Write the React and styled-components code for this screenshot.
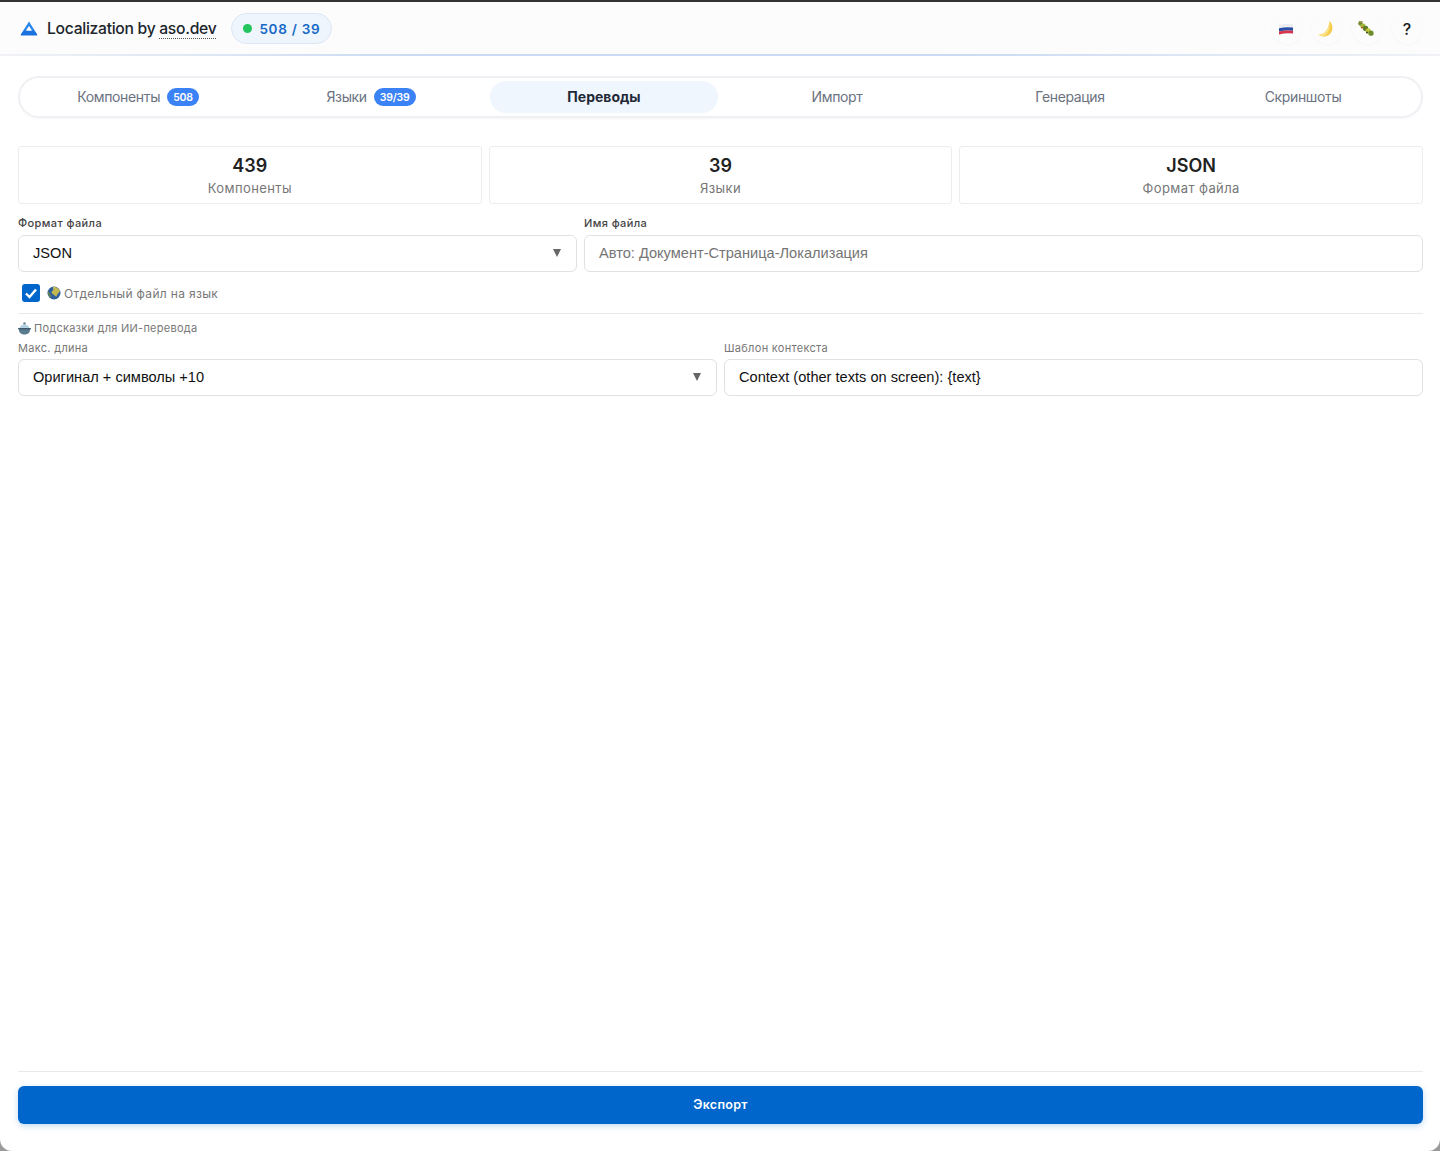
import styled, { createGlobalStyle } from 'styled-components';

const GlobalStyle = createGlobalStyle`
  html, body {
    margin: 0;
    padding: 0;
    height: 100%;
    background: #9a9a9a;
  }
  #root {
    height: 100%;
  }
  * {
    box-sizing: border-box;
  }
`;

const Page = styled.div`
  height: 1151px;
  display: flex;
  flex-direction: column;
  background: #fff;
  border-top: 2px solid #333;
  border-radius: 0 0 12px 12px;
  overflow: hidden;
  font-family: Inter, "Liberation Sans", sans-serif;
  color: #1f2937;
`;

const Header = styled.header`
  height: 54px;
  flex: none;
  display: flex;
  align-items: center;
  justify-content: space-between;
  padding: 1px 18px 0 20px;
  background: #fcfcfd;
  border-bottom: 2px solid;
  border-image: linear-gradient(90deg, #f0f2f5 0%, #c9daf2 30%, #c9daf2 65%, #f0f2f5 100%) 1;
`;

const Brand = styled.div`
  display: flex;
  align-items: center;
  gap: 9px;
  font-size: 15.7px;
  font-weight: 500;
  letter-spacing: -0.3px;
  color: #20252c;
`;

const BrandLink = styled.span`
  border-bottom: 1px dotted #555;
  line-height: 17px;
`;

const Counter = styled.div`
  display: flex;
  align-items: center;
  gap: 7px;
  height: 31px;
  margin-left: 6px;
  padding: 0 11px;
  background: #eff5fd;
  border: 1px solid #dbe6f6;
  border-radius: 16px;
  font-size: 13.5px;
  font-weight: 600;
  letter-spacing: 0.72px;
  color: #1668c7;
`;

const Dot = styled.span`
  width: 9px;
  height: 9px;
  border-radius: 50%;
  background: #22c55e;
`;

const HeaderActions = styled.div`
  display: flex;
  gap: 10px;
`;

const IconButton = styled.button`
  width: 30px;
  height: 30px;
  padding: 0;
  display: flex;
  align-items: center;
  justify-content: center;
  border: none;
  border-radius: 50%;
  background: #fcfcfd;
  box-shadow: 0 1px 3px rgba(20, 30, 50, 0.03);
  font: 500 16px Inter, sans-serif;
  color: #222;
`;

const Main = styled.main`
  flex: 1;
  display: flex;
  flex-direction: column;
  padding: 20px 17px 27px 18px;
`;

const Tabs = styled.nav`
  height: 42px;
  flex: none;
  display: grid;
  grid-template-columns: repeat(6, 1fr);
  column-gap: 5px;
  align-items: center;
  padding: 0 4px;
  border: 2px solid #eef0f3;
  border-radius: 21px;
  box-shadow: 0 1px 2px rgba(20, 30, 50, 0.04);
`;

const Tab = styled.div`
  height: 32px;
  padding-bottom: 2px;
  display: flex;
  align-items: center;
  justify-content: center;
  gap: 7px;
  border-radius: 16px;
  background: ${(props) => (props.$active ? '#eff6fe' : 'transparent')};
  font-size: 14px;
  font-weight: ${(props) => (props.$active ? 700 : 400)};
  letter-spacing: ${(props) => (props.$active ? '0' : '-0.35px')};
  color: ${(props) => (props.$active ? '#1f2937' : '#6b7280')};
`;

const Badge = styled.span`
  height: 18px;
  margin-top: 2px;
  padding: 0 6px;
  display: flex;
  align-items: center;
  border-radius: 9px;
  background: #3b82f6;
  font-size: 10.5px;
  font-weight: 600;
  letter-spacing: -0.2px;
  color: #fff;
`;

const Stats = styled.section`
  display: grid;
  grid-template-columns: repeat(3, 1fr);
  gap: 7px;
  margin-top: 28px;
`;

const StatCard = styled.div`
  height: 58px;
  display: flex;
  flex-direction: column;
  align-items: center;
  justify-content: center;
  border: 1px solid #ebedf0;
  border-radius: 3px;
`;

const StatValue = styled.div`
  margin-top: 1px;
  font-size: 18px;
  font-weight: 600;
  line-height: 24px;
  color: #222;
`;

const StatLabel = styled.div`
  margin-top: 1px;
  font-size: 13px;
  line-height: 18px;
  letter-spacing: 0.4px;
  color: #777;
`;

const Row = styled.div`
  display: grid;
  grid-template-columns: ${(props) => props.$columns};
  gap: 7px;
  margin-top: ${(props) => props.$top};
`;

const Field = styled.div`
  display: flex;
  flex-direction: column;
  gap: ${(props) => props.$gap};
`;

const Label = styled.label`
  font-size: 11px;
  line-height: 14px;
  letter-spacing: ${(props) => (props.$strong ? '0.4px' : '0.3px')};
  font-weight: ${(props) => (props.$strong ? 500 : 400)};
  color: ${(props) => (props.$strong ? '#444' : '#777')};
`;

const Control = styled.div`
  height: 37px;
  display: flex;
  align-items: center;
  justify-content: space-between;
  padding: 0 16px 2px 14px;
  border: 1px solid #dfe1e5;
  border-radius: 6px;
  font-family: "Liberation Sans", Arial, sans-serif;
  font-size: 14.6px;
  color: ${(props) => (props.$placeholder ? '#757575' : '#111')};
`;

const Arrow = styled.span`
  width: 0;
  height: 0;
  margin-right: -1px;
  border-left: 4px solid transparent;
  border-right: 4px solid transparent;
  border-top: 8px solid #666;
`;

const CheckRow = styled.div`
  display: flex;
  align-items: center;
  height: 18px;
  margin: 12px 0 0 4px;
  font-size: 12px;
  letter-spacing: 0.33px;
  color: #777;
`;

const CheckBox = styled.span`
  width: 18px;
  height: 18px;
  margin-right: 7px;
  display: flex;
  align-items: center;
  justify-content: center;
  border-radius: 3px;
  background: #0066cc;
`;

const Divider = styled.hr`
  width: 100%;
  margin: ${(props) => props.$margin};
  border: none;
  border-top: 1px solid #e8e9ec;
`;

const HintTitle = styled.div`
  display: flex;
  align-items: center;
  gap: 3px;
  height: 14px;
  font-size: 11px;
  letter-spacing: 0.25px;
  color: #777;
`;

const Spacer = styled.div`
  flex: 1;
`;

const ExportButton = styled.button`
  height: 38px;
  flex: none;
  padding-bottom: 2px;
  border: none;
  border-radius: 6px;
  background: #0066cc;
  box-shadow: 0 2px 6px rgba(10, 102, 204, 0.25);
  font: 600 12.5px Inter, sans-serif;
  letter-spacing: 0.3px;
  color: #fff;
`;

const Logo = () => (
  <svg width="18" height="15" viewBox="0 0 18 15">
    <path fillRule="evenodd" d="M9 0.5 L17.2 13.5 L0.8 13.5 Z M9 5.2 L5.2 11 L12.8 11 Z" fill="#2b86ee" />
    <path d="M0.8 13.5 L4 9.5 L14 9.5 L17.2 13.5 Q17.6 14.5 16.6 14.5 L1.4 14.5 Q0.4 14.5 0.8 13.5 Z" fill="#1b72de" />
    <path d="M9 5.2 L11.8 9.5 L6.2 9.5 Z" fill="#fcfcfd" />
  </svg>
);

const FlagIcon = () => (
  <svg width="16" height="12" viewBox="0 0 16 12" style={{ marginRight: 2 }}>
    <path d="M1 2 Q8 0 15 1 V4.5 Q8 3.5 1 5.2 Z" fill="#eceef2" />
    <path d="M1 5.2 Q8 3.5 15 4.5 V7.8 Q8 6.8 1 8.4 Z" fill="#2b4fa8" />
    <path d="M1 8.4 Q8 6.8 15 7.8 V10.6 Q8 9.8 1 11.6 Z" fill="#d5344a" />
  </svg>
);

const MoonIcon = () => (
  <svg width="18" height="18" viewBox="0 0 18 18" style={{ marginRight: 2 }}>
    <path d="M12.5 1 C16.5 5 16.5 11 12.5 14.5 C9 17.5 4.5 17 1.5 14.5 C6 14.8 11.5 11.5 12.5 1 Z" fill="#f6cd50" />
    <path d="M12.5 1 C11.5 11.5 6 14.8 1.5 14.5 C3 15.8 5 16.3 7 16 C11.5 13.5 13.5 7 12.5 1 Z" fill="#fbe38a" />
  </svg>
);

const CaterpillarIcon = () => (
  <svg width="18" height="18" viewBox="0 0 18 18" style={{ marginRight: 2 }}>
    <circle cx="3.5" cy="3.5" r="2.2" fill="#6d8c2c" />
    <circle cx="6" cy="6" r="2.6" fill="#a3b93a" />
    <circle cx="8.6" cy="8.4" r="2.6" fill="#5e7a28" />
    <circle cx="11.2" cy="10.8" r="2.6" fill="#c2c63c" />
    <circle cx="14" cy="13.2" r="2.6" fill="#6d8c2c" />
    <circle cx="5" cy="7.5" r="1" fill="#c0563a" />
    <circle cx="10" cy="12.5" r="1" fill="#3c4a1e" />
    <path d="M2 1 L3.5 3 M5.5 1 L4 3" stroke="#a8803a" strokeWidth="1" />
  </svg>
);

const GlobeIcon = () => (
  <svg width="14" height="14" viewBox="0 0 14 14" style={{ marginRight: 3 }}>
    <circle cx="7" cy="7" r="6.5" fill="#2f5f9e" />
    <path d="M6 0.7 C9 0.6 12 2.5 13 5 C12 7 10 8 9.5 10.5 C8 11 7.5 8.5 5.5 8 C4 7 4.5 5 6 4.5 C7 3.5 5.5 2 6 0.7 Z" fill="#c2b850" />
    <path d="M1 5 C2.5 6 3 8 4.5 10 C4 11.5 3.5 12 3 11.5 C1.5 10 0.5 7.5 1 5 Z" fill="#5f7f58" />
  </svg>
);

const PotIcon = () => (
  <svg width="13" height="13" viewBox="0 0 13 13">
    <circle cx="6.5" cy="1.6" r="1.3" fill="#6f8596" />
    <path d="M1.5 6.5 C2 3.5 4 2.5 6.5 2.5 C9 2.5 11 3.5 11.5 6.5 Z" fill="#b5d2e4" />
    <path d="M1 6.5 H12 C12.5 10 10.5 12.5 6.5 12.5 C2.5 12.5 0.5 10 1 6.5 Z" fill="#5a7a90" />
    <rect x="0" y="6" width="13" height="1.4" rx="0.7" fill="#3d5a6d" />
  </svg>
);

const CheckMark = () => (
  <svg width="14" height="14" viewBox="0 0 14 14">
    <path d="M2 7.5 L5.5 11 L12 3.5" fill="none" stroke="#fff" strokeWidth="2.4" />
  </svg>
);

const tabs = [
  { name: 'Компоненты', badge: '508' },
  { name: 'Языки', badge: '39/39' },
  { name: 'Переводы', active: true },
  { name: 'Импорт' },
  { name: 'Генерация' },
  { name: 'Скриншоты' },
];

const stats = [
  { value: '439', label: 'Компоненты' },
  { value: '39', label: 'Языки' },
  { value: 'JSON', label: 'Формат файла' },
];

export default function App() {
  return (
    <>
      <GlobalStyle />
      <Page>
        <Header>
          <Brand>
            <Logo />
            <span>
              Localization by <BrandLink>aso.dev</BrandLink>
            </span>
            <Counter>
              <Dot />
              508 / 39
            </Counter>
          </Brand>
          <HeaderActions>
            <IconButton><FlagIcon /></IconButton>
            <IconButton><MoonIcon /></IconButton>
            <IconButton><CaterpillarIcon /></IconButton>
            <IconButton>?</IconButton>
          </HeaderActions>
        </Header>
        <Main>
          <Tabs>
            {tabs.map((tab) => (
              <Tab key={tab.name} $active={tab.active}>
                {tab.name}
                {tab.badge && <Badge>{tab.badge}</Badge>}
              </Tab>
            ))}
          </Tabs>
          <Stats>
            {stats.map((stat) => (
              <StatCard key={stat.label}>
                <StatValue>{stat.value}</StatValue>
                <StatLabel>{stat.label}</StatLabel>
              </StatCard>
            ))}
          </Stats>
          <Row $columns="559px 1fr" $top="12px">
            <Field $gap="5px">
              <Label $strong>Формат файла</Label>
              <Control>
                JSON
                <Arrow />
              </Control>
            </Field>
            <Field $gap="5px">
              <Label $strong>Имя файла</Label>
              <Control $placeholder>Авто: Документ-Страница-Локализация</Control>
            </Field>
          </Row>
          <CheckRow>
            <CheckBox><CheckMark /></CheckBox>
            <GlobeIcon />
            Отдельный файл на язык
          </CheckRow>
          <Divider $margin="11px 0 7px" />
          <HintTitle>
            <PotIcon />
            Подсказки для ИИ-перевода
          </HintTitle>
          <Row $columns="1fr 1fr" $top="6px">
            <Field $gap="4px">
              <Label>Макс. длина</Label>
              <Control>
                Оригинал + символы +10
                <Arrow />
              </Control>
            </Field>
            <Field $gap="4px">
              <Label>Шаблон контекста</Label>
              <Control>{'Context (other texts on screen): {text}'}</Control>
            </Field>
          </Row>
          <Spacer />
          <Divider $margin="0 0 14px" />
          <ExportButton>Экспорт</ExportButton>
        </Main>
      </Page>
    </>
  );
}
